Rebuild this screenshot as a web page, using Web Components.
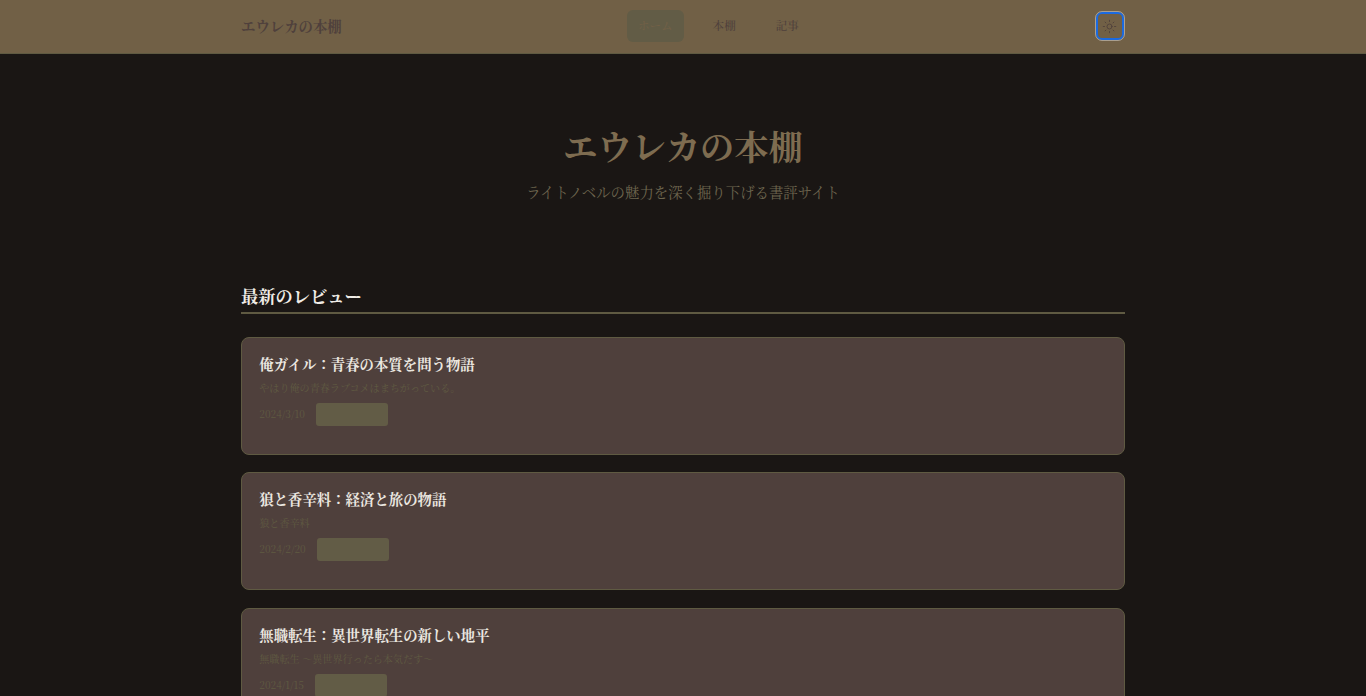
<!DOCTYPE html>
<html lang="ja">
<head>
<meta charset="utf-8">
<title>エウレカの本棚</title>
<style>
  html, body { margin: 0; padding: 0; height: 696px; overflow: hidden; background: #1a1614; }
  body { font-family: "Noto Serif CJK JP", "Noto Serif JP", "Liberation Serif", serif; }
</style>
</head>
<body>
<site-header></site-header>
<main-page>
  <hero-block title="エウレカの本棚" sub="ライトノベルの魅力を深く掘り下げる書評サイト"></hero-block>
  <section-title>最新のレビュー</section-title>
  <review-card title="俺ガイル：青春の本質を問う物語" book="やはり俺の青春ラブコメはまちがっている。" date="2024/3/10"></review-card>
  <review-card title="狼と香辛料：経済と旅の物語" book="狼と香辛料" date="2024/2/20"></review-card>
  <review-card title="無職転生：異世界転生の新しい地平" book="無職転生 ～異世界行ったら本気だす～" date="2024/1/15"></review-card>
</main-page>
<script>
// ヘッダー
class SiteHeader extends HTMLElement {
  constructor() {
    super();
    this.attachShadow({ mode: 'open' });
    this.shadowRoot.innerHTML = `
      <style>
        :host { display: block; background: #716046; border-bottom: 1px solid #5f5a42; height: 54px; box-sizing: border-box; }
        .inner { width: 884px; margin: 0 auto; height: 52px; display: flex; justify-content: space-between; align-items: center; }
        .logo { font-size: 14.4px; font-weight: 700; color: #4f403c; padding-bottom: 2px; }
        nav { display: flex; gap: 17px; }
        a { display: block; padding: 0 11.52px; height: 32px; line-height: 31px; font-size: 11.52px; font-weight: 500; color: #4f403c; border-radius: 6px; }
        a.on { background: #625c46; color: #716046; }
        button { width: 28px; height: 28px; box-sizing: border-box; padding: 0; margin: 1px; display: flex; align-items: center; justify-content: center; background: none; border: 2px solid #1b6ae0; border-radius: 6px; outline: 1px solid rgba(255,255,255,.4); }
        svg { width: 15px; height: 15px; stroke: #4f403c; fill: none; stroke-width: 1.4; stroke-linecap: round; }
      </style>
      <div class="inner">
        <div class="logo">エウレカの本棚</div>
        <nav><a class="on">ホーム</a><a>本棚</a><a>記事</a></nav>
        <button aria-label="テーマ切替">
          <svg viewBox="0 0 24 24"><circle cx="12" cy="12" r="4"/><path d="M12 2v2M12 20v2M4.9 4.9l1.4 1.4M17.7 17.7l1.4 1.4M2 12h2M20 12h2M6.3 17.7l-1.4 1.4M19.1 4.9l-1.4 1.4"/></svg>
        </button>
      </div>`;
  }
}

class MainPage extends HTMLElement {
  constructor() {
    super();
    this.attachShadow({ mode: 'open' });
    this.shadowRoot.innerHTML = `
      <style>:host { display: block; width: 884px; margin: 0 auto; }</style>
      <slot></slot>`;
  }
}

class HeroBlock extends HTMLElement {
  connectedCallback() {
    if (this.shadowRoot) return;
    this.attachShadow({ mode: 'open' });
    this.shadowRoot.innerHTML = `
      <style>
        :host { display: block; text-align: center; padding-top: 69px; height: 224px; box-sizing: border-box; }
        h1 { margin: 0; font-size: 34.2px; line-height: 46px; font-weight: 700; color: #7e6c50; }
        p { margin: 11px 0 0; font-size: 14.4px; line-height: 24px; color: #6d654e; }
      </style>
      <h1>${this.getAttribute('title')}</h1>
      <p>${this.getAttribute('sub')}</p>`;
  }
}

class SectionTitle extends HTMLElement {
  constructor() {
    super();
    this.attachShadow({ mode: 'open' });
    this.shadowRoot.innerHTML = `
      <style>
        :host { display: block; font-size: 17.28px; line-height: 28px; font-weight: 700; color: #f0ece6; padding: 3px 0 2px; border-bottom: 2px solid #5f5a42; margin-bottom: 23px; margin-top: 1px; }
      </style>
      <slot></slot>`;
  }
}

class ReviewCard extends HTMLElement {
  connectedCallback() {
    if (this.shadowRoot) return;
    this.attachShadow({ mode: 'open' });
    this.shadowRoot.innerHTML = `
      <style>
        :host { display: block; height: 118px; box-sizing: border-box; margin-bottom: 17.28px; padding: 16px 17.28px; background: #4f403c; border: 1px solid #5f5a42; border-radius: 8px; }
        h2 { margin: 0; font-size: 14.4px; line-height: 20px; font-weight: 700; color: #ebe7e0; }
        .book { margin-top: 6px; font-size: 10.08px; line-height: 16px; color: #5f5a42; }
        .meta { margin-top: 7px; display: flex; align-items: center; gap: 11.5px; font-size: 10.08px; color: #5f5a42; }
        .date { padding-bottom: 2px; }
        .tag { width: 72px; height: 23px; background: #625c46; border-radius: 3px; }
      </style>
      <h2>${this.getAttribute('title')}</h2>
      <div class="book">${this.getAttribute('book')}</div>
      <div class="meta"><span class="date">${this.getAttribute('date')}</span><span class="tag"></span></div>`;
  }
}

customElements.define('site-header', SiteHeader);
customElements.define('main-page', MainPage);
customElements.define('hero-block', HeroBlock);
customElements.define('section-title', SectionTitle);
customElements.define('review-card', ReviewCard);
</script>
</body>
</html>
